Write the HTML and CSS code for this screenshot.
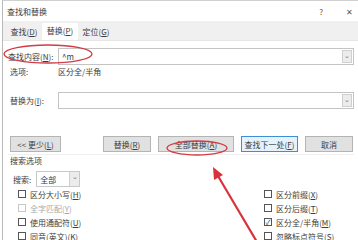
FILE: index.html
```html
<!DOCTYPE html>
<html lang="zh-CN">
<head>
    <meta charset="UTF-8">
    <title>查找和替换</title>
    <link rel="stylesheet" href="styles.css">
</head>
<body>
    <div class="dialog">
        <div class="titlebar">
            <span class="title">查找和替换</span>
            <span class="title-btns"><span class="help">?</span><span class="close">✕</span></span>
        </div>

        <div class="tabs">
            <span class="tab">查找(<u>D</u>)</span>
            <span class="tab active">替换(<u>P</u>)</span>
            <span class="tab">定位(<u>G</u>)</span>
        </div>

        <div class="content">
            <div class="row find-row">
                <label class="lbl">查找内容(<u>N</u>):</label>
                <div class="combo"><span class="combo-text">^m</span><span class="combo-arrow">⌄</span></div>
            </div>
            <div class="row opts-row">
                <span class="lbl">选项:</span>
                <span>区分全/半角</span>
            </div>
            <div class="row replace-row">
                <label class="lbl">替换为(<u>I</u>):</label>
                <div class="combo"><span class="combo-text"></span><span class="combo-arrow">⌄</span></div>
            </div>

            <div class="buttons">
                <button class="btn less">&lt;&lt; 更少(<u>L</u>)</button>
                <button class="btn replace">替换(<u>R</u>)</button>
                <button class="btn replace-all">全部替换(<u>A</u>)</button>
                <button class="btn find-next">查找下一处(<u>F</u>)</button>
                <button class="btn cancel">取消</button>
            </div>

            <div class="group-title">搜索选项</div>

            <div class="search-row">
                <span>搜索:</span>
                <div class="select"><span class="select-text">全部</span><span class="combo-arrow">⌄</span></div>
            </div>

            <div class="checks">
                <div class="check-col">
                    <div class="check"><span class="box"></span>区分大小写(<u>H</u>)</div>
                    <div class="check disabled"><span class="box"></span>全字匹配(<u>Y</u>)</div>
                    <div class="check"><span class="box"></span>使用通配符(<u>U</u>)</div>
                    <div class="check"><span class="box"></span>同音(英文)(<u>K</u>)</div>
                </div>
                <div class="check-col right">
                    <div class="check"><span class="box"></span>区分前缀(<u>X</u>)</div>
                    <div class="check"><span class="box"></span>区分后缀(<u>T</u>)</div>
                    <div class="check"><span class="box checked">✓</span>区分全/半角(<u>M</u>)</div>
                    <div class="check"><span class="box"></span>忽略标点符号(<u>S</u>)</div>
                </div>
            </div>
        </div>
    </div>

    <!-- red marks drawn over the screenshot -->
    <svg class="marks" width="358" height="240" viewBox="0 0 358 240">
        <ellipse cx="48" cy="54" rx="44" ry="9" fill="none" stroke="#d23a44" stroke-width="1.3"/>
        <ellipse cx="197" cy="148" rx="30" ry="7" fill="none" stroke="#d23a44" stroke-width="1.3"/>
        <line x1="257" y1="242" x2="218" y2="176" stroke="#d8323c" stroke-width="2.2"/>
        <polygon points="213,167 223,175 214,180" fill="#d8323c"/>
    </svg>
</body>
</html>
```

FILE: styles.css
```css
body {
    margin: 0;
    width: 358px;
    height: 240px;
    overflow: hidden;
    background-color: #fff;
    font-family: "Noto Sans CJK SC", "Liberation Sans", sans-serif;
    font-size: 8px;
    color: #3c3c3c;
    position: relative;
}

u {
    text-decoration: underline;
}

.dialog {
    margin-left: 2px;
    border-left: 1px solid #b9b9b9;
    border-top: 1px solid #d0d0d0;
    height: 240px;
}

.titlebar {
    height: 20px;
    display: flex;
    align-items: center;
    justify-content: space-between;
    padding: 0 5px 0 4px;
}

.title-btns {
    display: flex;
    gap: 23px;
    color: #555;
}

.tabs {
    height: 19px;
    background-color: #f0f0f0;
    display: flex;
    align-items: flex-end;
    padding-left: 3px;
}

.tab {
    width: 36px;
    height: 16px;
    line-height: 16px;
    text-align: center;
}

.tab.active {
    background-color: #fff;
    height: 17px;
}

.content {
    border-top: 1px solid #e6e6e6;
    padding: 7px 4px 0 5px;
}

.row {
    display: flex;
    align-items: center;
}

.lbl {
    width: 50px;
    flex: none;
}

.combo {
    flex: 1;
    height: 15px;
    border: 1px solid #c4c4c4;
    display: flex;
    align-items: center;
    justify-content: space-between;
}

.combo-text {
    padding-left: 3px;
}

.combo-arrow {
    width: 10px;
    height: 13px;
    margin-right: 1px;
    background-color: #ececec;
    border: 1px solid #cfcfcf;
    box-sizing: border-box;
    font-size: 7px;
    line-height: 8px;
    text-align: center;
    color: #777;
}

.opts-row {
    height: 12px;
    padding-left: 2px;
}

.opts-row .lbl {
    width: 48px;
}

.replace-row {
    margin-top: 15px;
    padding-left: 2px;
}

.replace-row .lbl {
    width: 48px;
}

.buttons {
    display: flex;
    margin-top: 27px;
    padding-left: 2px;
}

.btn {
    height: 16px;
    padding: 0;
    font-family: inherit;
    font-size: 8px;
    color: #3c3c3c;
    background-color: #e1e1e1;
    border: 1px solid #b4b4b4;
}

.less {
    width: 51px;
    margin-right: 42px;
}

.replace {
    width: 48px;
    margin-right: 7px;
}

.replace-all {
    width: 76px;
    margin-right: 7px;
}

.find-next {
    width: 57px;
    margin-right: 7px;
    background-color: #e5f1fb;
    border-color: #3d8ed6;
}

.cancel {
    width: 48px;
}

.group-title {
    margin-top: 2px;
    padding-left: 2px;
    height: 12px;
    line-height: 12px;
    border-top: 1px solid #f0f0f0;
}

.search-row {
    display: flex;
    align-items: center;
    gap: 5px;
    margin-top: 4px;
    padding-left: 5px;
}

.select {
    width: 42px;
    height: 14px;
    border: 1px solid #c8c8c8;
    display: flex;
    align-items: center;
    justify-content: space-between;
}

.select-text {
    padding-left: 3px;
}

.select .combo-arrow {
    height: 14px;
    margin-right: 0;
    border-width: 0 0 0 1px;
}

.checks {
    display: flex;
}

.check-col {
    width: 256px;
    flex: none;
    box-sizing: border-box;
    padding-left: 10px;
}

.check-col.right {
    width: auto;
    flex: 1;
    padding-left: 0;
}

.check {
    display: flex;
    align-items: center;
    height: 14px;
    white-space: nowrap;
}

.box {
    width: 8px;
    height: 8px;
    flex: none;
    border: 1px solid #555;
    margin-right: 4px;
    box-sizing: border-box;
    font-size: 7px;
    line-height: 6px;
    text-align: center;
}

.check.disabled {
    color: #a8a8a8;
}

.check.disabled .box {
    border-color: #c8c8c8;
}

.marks {
    position: absolute;
    left: 0;
    top: 0;
}
```
